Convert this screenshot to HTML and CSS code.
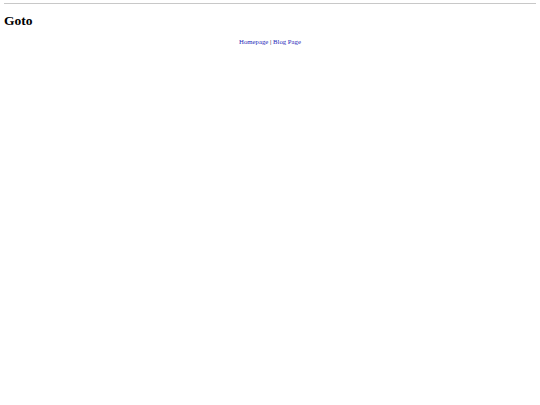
FILE: index.html
```html
<!DOCTYPE html>
<html lang="en">
<head>
    <meta charset="UTF-8">
    <meta name="viewport" content="width=device-width, initial-scale=1.0">
    <title>Goto</title>
    <link rel="stylesheet" href="styles.css">
</head>
<body>
    <hr class="rule">
    <h2 class="title">Goto</h2>
    <p class="links">
        <a href="#">Homepage</a> | <a href="#">Blog Page</a>
    </p>
</body>
</html>
```

FILE: styles.css
```css
body {
    font-family: "Liberation Serif", "Times New Roman", serif;
    margin: 0 4px;
    padding-top: 3px;
    background-color: #fff;
    color: #000;
}
.rule {
    margin: 0;
    border: none;
    border-top: 1px solid #c8c8c8;
}
.title {
    font-size: 13.5px;
    font-weight: bold;
    margin: 9px 0 0;
}
.links {
    text-align: center;
    font-size: 6.75px;
    margin: 9px 0 0;
}
.links a {
    color: #2626b8;
}
```
